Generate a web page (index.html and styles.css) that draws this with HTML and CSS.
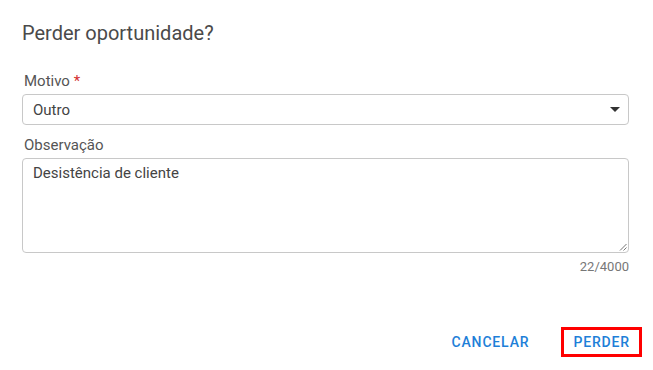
FILE: index.html
```html
<!DOCTYPE html>
<html lang="pt">
<head>
<meta charset="utf-8">
<link rel="stylesheet" href="styles.css">
</head>
<body>
<div class="dialog">
  <h2 class="title">Perder oportunidade?</h2>
  <div class="field field-motivo">
    <label class="label">Motivo <span class="req">*</span></label>
    <div class="select">
      <span class="value">Outro</span>
      <svg class="caret" width="10" height="5" viewBox="0 0 10 5"><path d="M0 0 L10 0 L5 5 Z" fill="#333"/></svg>
    </div>
  </div>
  <div class="field field-obs">
    <label class="label">Observação</label>
    <div class="textarea">
      <span class="value">Desistência de cliente</span>
      <svg class="grip" width="8" height="8" viewBox="0 0 8 8"><path d="M7.5 1 L1 7.5 M7.5 4.5 L4.5 7.5" stroke="#777" stroke-width="1"/></svg>
    </div>
    <div class="counter">22/4000</div>
  </div>
  <div class="actions">
    <button class="btn">CANCELAR</button>
    <button class="btn btn-primary">PERDER</button>
  </div>
</div>
</body>
</html>
```
FILE: styles.css
```css
html, body {
  margin: 0;
  padding: 0;
  background: #fff;
}
body {
  font-family: Roboto, "Liberation Sans", Arial, sans-serif;
  color: #444;
}
.dialog {
  width: 653px;
  height: 370px;
  box-sizing: border-box;
  padding: 22px 24px 0 22px;
  display: flex;
  flex-direction: column;
}
.title {
  margin: 0;
  font-size: 20px;
  font-weight: 400;
  line-height: 22px;
  color: #4a4a4a;
}
.field {
  display: flex;
  flex-direction: column;
}
.field-motivo {
  margin-top: 29px;
}
.field-obs {
  margin-top: 12px;
}
.label {
  font-size: 15px;
  line-height: 16px;
  color: #555;
  padding-left: 2px;
  margin-bottom: 5px;
}
.req {
  color: #d32f2f;
}
.select {
  height: 31px;
  box-sizing: border-box;
  border: 1px solid #c8c8c8;
  border-radius: 4px;
  display: flex;
  align-items: center;
  justify-content: space-between;
  padding: 0 8px 0 10px;
}
.value {
  font-size: 15px;
  color: #444;
}
.caret {
  display: block;
}
.textarea {
  position: relative;
  height: 95px;
  box-sizing: border-box;
  border: 1px solid #c8c8c8;
  border-radius: 4px;
  padding: 6px 10px;
  line-height: 16px;
}
.grip {
  position: absolute;
  right: 1px;
  bottom: 1px;
}
.counter {
  text-align: right;
  font-size: 13px;
  color: #777;
  margin-top: 7px;
  line-height: 14px;
}
.actions {
  display: flex;
  justify-content: flex-end;
  align-items: center;
  margin-top: 53px;
  margin-right: -13px;
  gap: 20px;
}
.btn {
  font-family: Roboto, "Liberation Sans", Arial, sans-serif;
  font-size: 14px;
  font-weight: 500;
  letter-spacing: 0.06em;
  color: #1e7fd8;
  background: none;
  border: 3px solid transparent;
  padding: 0 9px;
  height: 30px;
  cursor: pointer;
}
.btn-primary {
  border-color: #ff0000;
}
```
